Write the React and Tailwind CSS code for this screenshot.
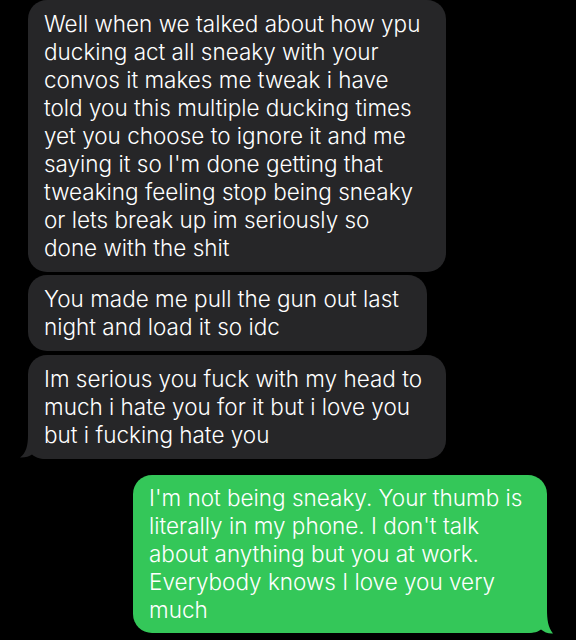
import React from 'react';

const incoming = [
  {
    width: 'w-[418px]',
    gap: '',
    lines: [
      'Well when we talked about how ypu',
      'ducking act all sneaky with your',
      'convos it makes me tweak i have',
      'told you this multiple ducking times',
      'yet you choose to ignore it and me',
      "saying it so I'm done getting that",
      'tweaking feeling stop being sneaky',
      'or lets break up im seriously so',
      'done with the shit',
    ],
  },
  {
    width: 'w-[399px]',
    gap: 'mt-[3px]',
    lines: ['You made me pull the gun out last', 'night and load it so idc'],
  },
  {
    width: 'w-[418px]',
    gap: 'mt-[4px]',
    tail: true,
    lines: [
      'Im serious you fuck with my head to',
      'much i hate you for it but i love you',
      'but i fucking hate you',
    ],
  },
];

const outgoing = [
  "I'm not being sneaky. Your thumb is",
  "literally in my phone. I don't talk",
  'about anything but you at work.',
  'Everybody knows I love you very',
  'much',
];

function Lines({ lines }) {
  return lines.map((l, i) => (
    <div key={i} className="whitespace-nowrap">
      {l}
    </div>
  ));
}

function GrayTail() {
  return (
    <svg
      className="absolute left-[-8px] bottom-0"
      width="30"
      height="24"
      viewBox="0 0 30 24"
    >
      <path
        d="M8 0 C8 11 6 18 0 22.5 C5 22.8 9 21.5 12 19.5 C15 22 19 24 26 24 L30 24 L30 0 Z"
        fill="#262628"
      />
    </svg>
  );
}

function GreenTail() {
  return (
    <svg
      className="absolute right-[-6px] bottom-[-1px]"
      width="30"
      height="25"
      viewBox="0 0 30 25"
    >
      <path
        d="M24 0 C24 11 25 18 30 24.5 C25 24.8 21 23 18 20.5 C15 23 11 24 4 24 L0 24 L0 0 Z"
        fill="#34c759"
      />
    </svg>
  );
}

export default function App() {
  return (
    <div
      className="w-[576px] h-[640px] bg-black overflow-hidden text-white text-[22.5px] leading-[28px] font-[350]"
      style={{ fontFamily: 'Inter, "Liberation Sans", sans-serif' }}
    >
      <div className="flex flex-col pl-[28px]">
        {incoming.map((m, i) => (
          <div
            key={i}
            className={`relative ${m.width} ${m.gap} bg-[#262628] rounded-[19px] pl-[16px] pr-3 py-[10px]`}
          >
            {m.tail && <GrayTail />}
            <div className="relative">
              <Lines lines={m.lines} />
            </div>
          </div>
        ))}
      </div>
      <div className="flex justify-end pr-[29px] mt-[16px]">
        <div className="relative w-[414px] bg-[#34c759] rounded-[19px] pl-[16px] pr-3 py-[9px]">
          <GreenTail />
          <div className="relative">
            <Lines lines={outgoing} />
          </div>
        </div>
      </div>
    </div>
  );
}
